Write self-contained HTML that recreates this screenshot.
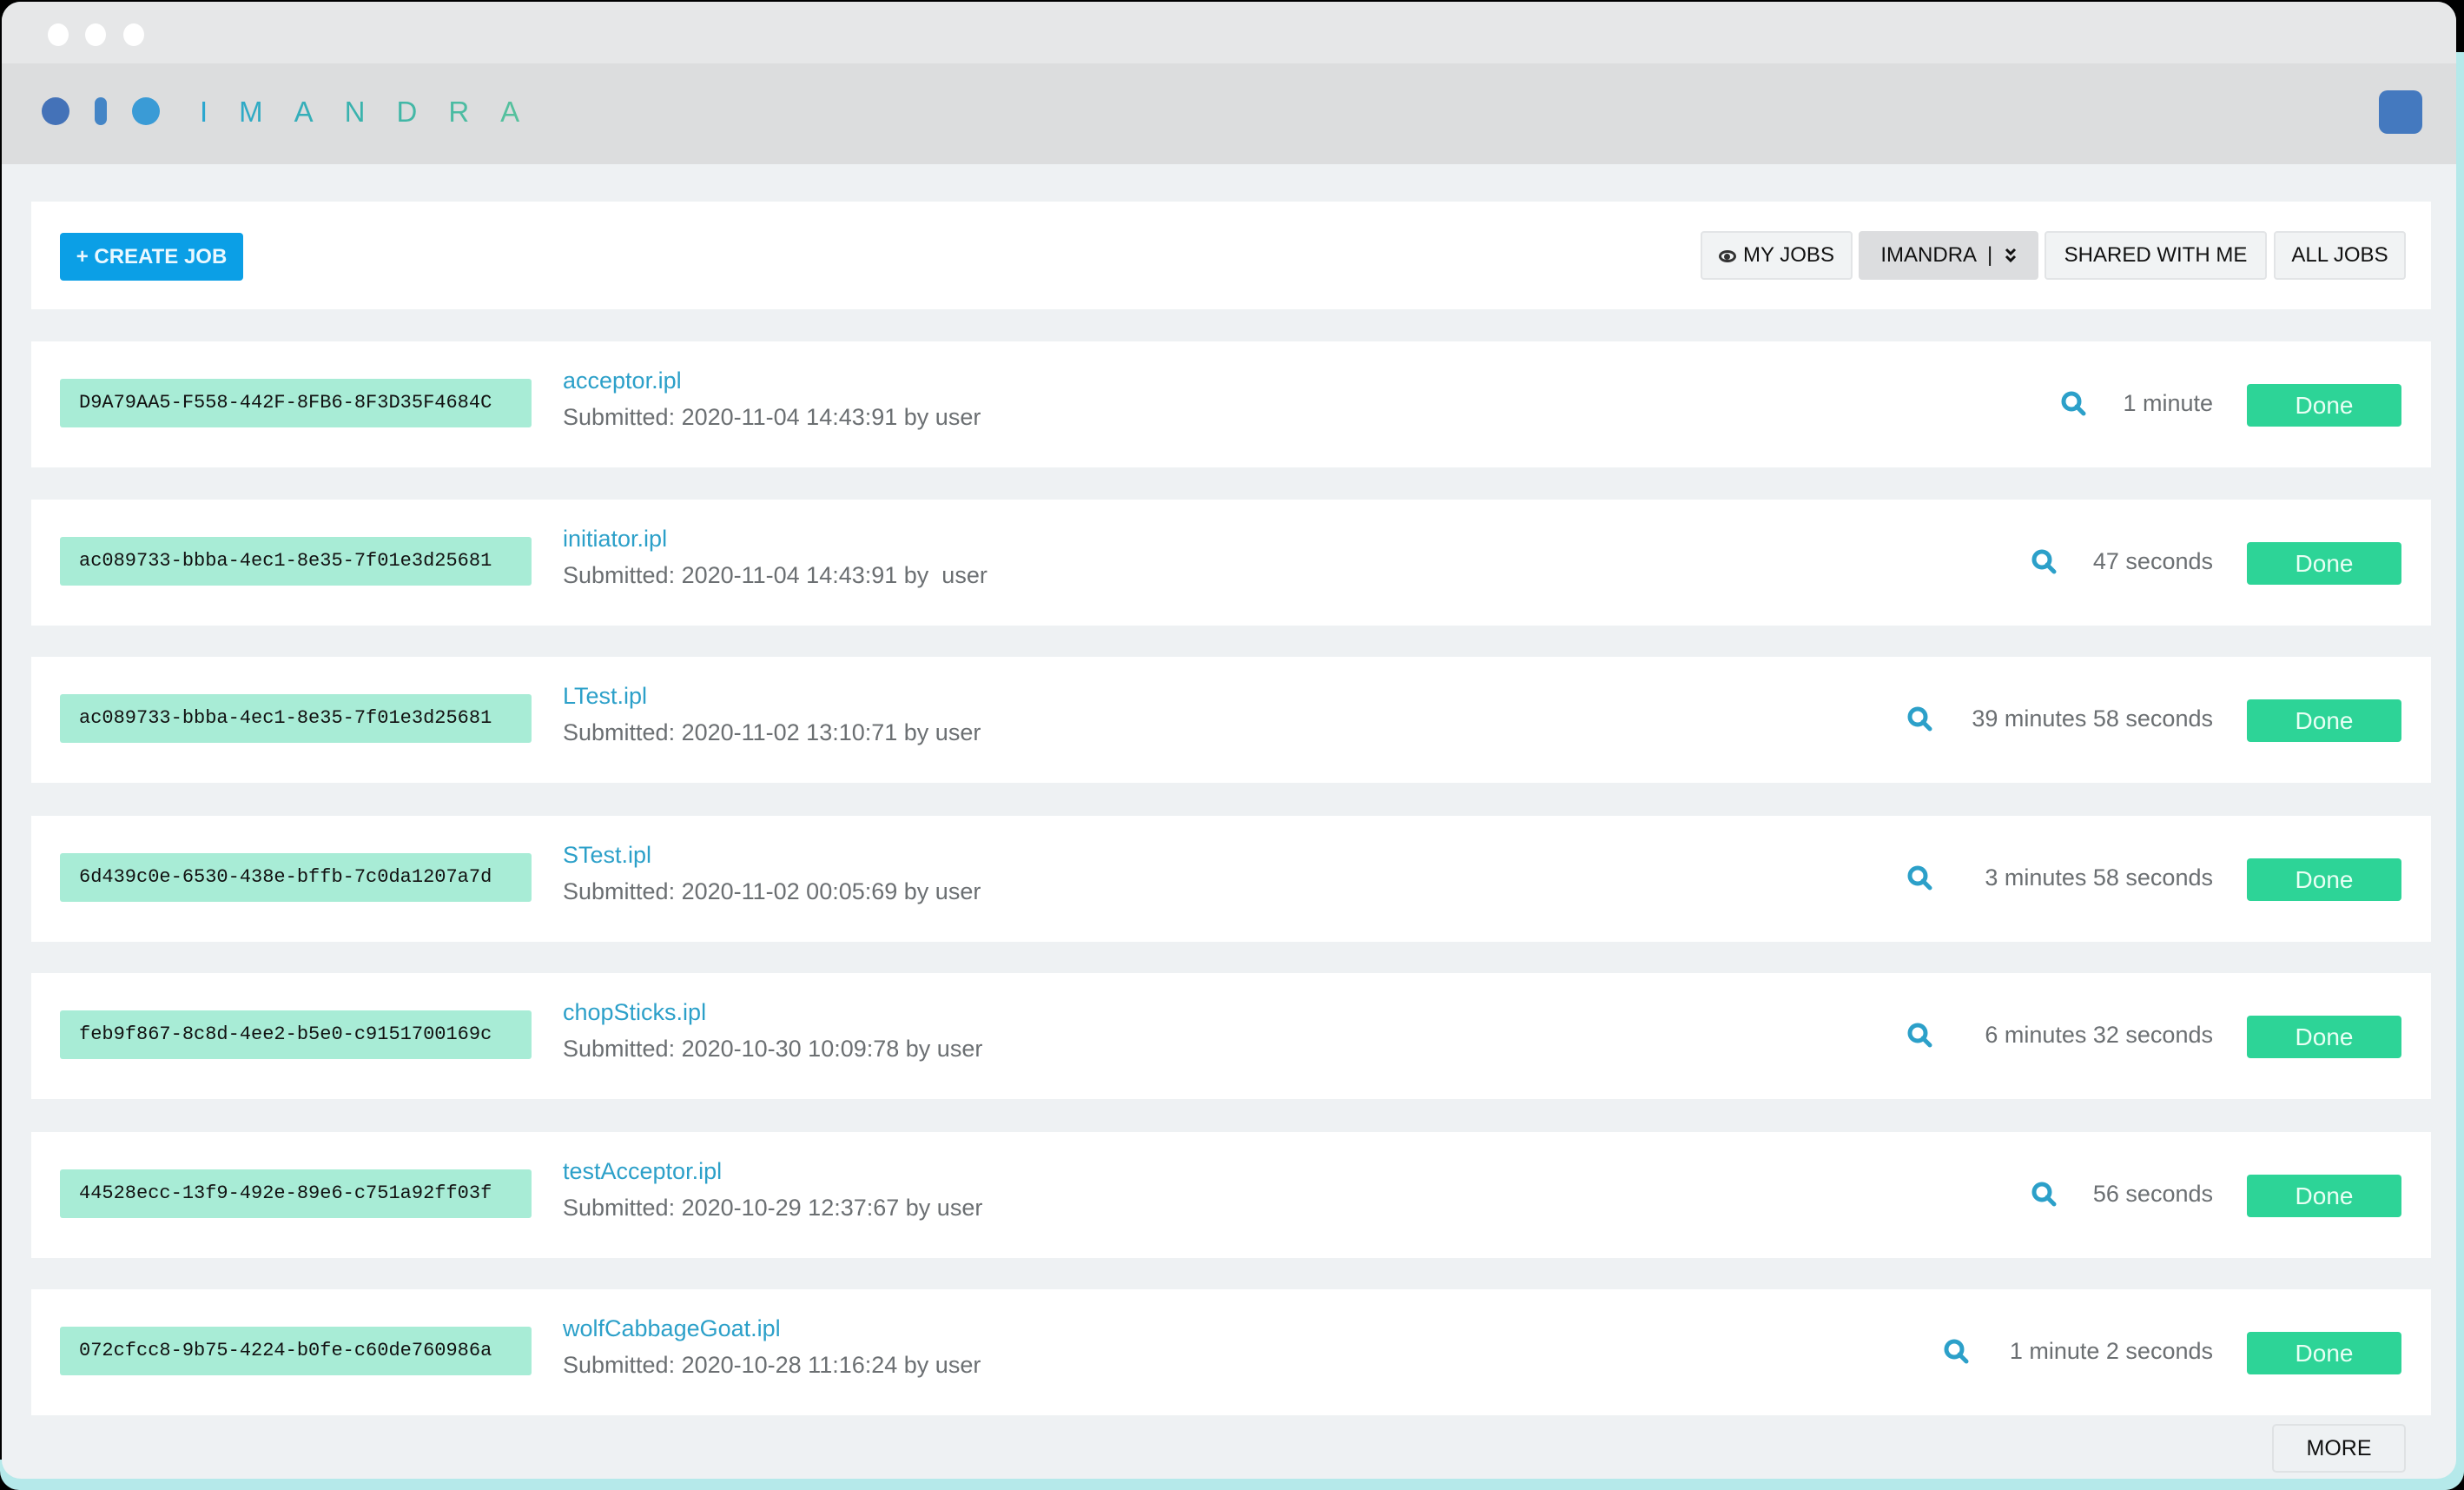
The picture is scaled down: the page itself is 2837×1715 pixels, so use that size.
<!DOCTYPE html>
<html><head><meta charset="utf-8"><style>
*{margin:0;padding:0;box-sizing:border-box}
body{width:2837px;height:1715px;background:#000;position:relative;overflow:hidden;font-family:"Liberation Sans",sans-serif}
.abs{position:absolute;white-space:nowrap}
.win{left:2px;top:2px;width:2826px;height:1700px;background:#eef1f3;border-radius:22px;overflow:hidden}
.shadowR{left:2800px;top:60px;width:37px;height:1655px;background:#b5e9ea;border-radius:0 0 22px 0}
.shadowB{left:0;top:1680px;width:2837px;height:35px;background:#b5e9ea;border-radius:0 0 22px 22px}
.title{left:0;top:0;width:2826px;height:71px;background:#e6e7e8}
.head{left:0;top:71px;width:2826px;height:116px;background:#dcddde}
.dot{width:24px;height:26px;border-radius:50%;background:#fff;top:25px}
.card{left:34px;width:2763px;background:#fff}
.idb{left:67px;width:543px;height:56px;background:#a8ecd6;border-radius:3px;font-family:"Liberation Mono",monospace;font-size:22px;color:#111;line-height:56px;padding-left:22px;overflow:hidden}
.ttl{left:646px;font-size:27px;color:#2ca0c9}
.sub{left:646px;font-size:27px;color:#6b6f72}
.dur{font-size:27px;color:#6b6f72;text-align:right}
.done{left:2585px;width:178px;height:49px;background:#2dd497;border-radius:4px;color:#e8fff4;font-size:28px;text-align:center;line-height:49px}
.fb{top:264px;height:56px;border:2px solid #e2e4e6;border-radius:4px;background:#f1f3f4;font-size:24px;color:#111;line-height:52px;text-align:center}
</style></head><body>
<div class="abs shadowR"></div><div class="abs shadowB"></div>
<div class="abs win">
 <div class="abs title"></div>
 <div class="abs head"></div>
 <div class="abs dot" style="left:53px"></div>
 <div class="abs dot" style="left:96px"></div>
 <div class="abs dot" style="left:140px"></div>
 <div class="abs" style="left:46px;top:110px;width:32px;height:32px;border-radius:50%;background:#4472b8"></div>
 <div class="abs" style="left:107px;top:110px;width:14px;height:32px;border-radius:7px;background:#4485c6"></div>
 <div class="abs" style="left:150px;top:110px;width:32px;height:32px;border-radius:50%;background:#3a9bd6"></div>
 <div class="abs" style="left:228px;top:110px;font-size:33px;letter-spacing:36px;line-height:34px;background:linear-gradient(90deg,#2aa6d0,#3cb4a9 50%,#5cc49a);-webkit-background-clip:text;color:transparent">IMANDRA</div>
 <div class="abs" style="left:2737px;top:102px;width:50px;height:50px;border-radius:10px;background:#4479bf"></div>

 <div class="abs card" style="top:230px;height:124px"></div>
 <div class="abs" style="left:67px;top:266px;width:211px;height:55px;background:#0b9fe6;border-radius:4px;color:#eaf8ff;font-size:24px;font-weight:bold;line-height:55px;text-align:center">+ CREATE JOB</div>
 <div class="abs fb" style="left:1956px;width:175px"><span style="display:inline-block;width:20px;height:14px;border:3px solid #333;border-radius:50%;vertical-align:-1px;margin-right:8px;position:relative"><span style="position:absolute;left:3px;top:1px;width:7px;height:7px;background:#333;border-radius:50%"></span></span>MY JOBS</div>
 <div class="abs fb" style="left:2138px;width:207px;background:#dcdddf;border-color:#dcdddf">IMANDRA &nbsp;| &nbsp;<svg width="14" height="20" viewBox="0 0 14 20" style="vertical-align:-3px"><path d="M2 3l5 5 5-5M2 11l5 5 5-5" fill="none" stroke="#111" stroke-width="3"/></svg></div>
 <div class="abs fb" style="left:2352px;width:256px">SHARED WITH ME</div>
 <div class="abs fb" style="left:2616px;width:152px">ALL JOBS</div>

 <div class="abs" style="left:2614px;top:1637px;width:154px;height:56px;border:2px solid #dfe2e4;border-radius:5px;background:#eef1f3;font-size:25px;line-height:52px;text-align:center;color:#111">MORE</div>
</div>
<svg width="0" height="0" style="position:absolute"><defs><symbol id="mg" viewBox="0 0 32 32"><circle cx="13" cy="13" r="9" fill="none" stroke="#2ca0c9" stroke-width="5"/><path d="M19 19l8 8" stroke="#2ca0c9" stroke-width="5" stroke-linecap="round"/></symbol></defs></svg>
<div style="position:absolute;left:2px;top:2px">
<div class="abs card" style="top:391px;height:145px"></div>
<div class="abs idb" style="top:434px">D9A79AA5-F558-442F-8FB6-8F3D35F4684C</div>
<div class="abs ttl" style="top:421px">acceptor.ipl</div>
<div class="abs sub" style="top:463px">Submitted: 2020-11-04 14:43:91 by user</div>
<svg class="abs" style="left:2370px;top:447px" width="32" height="32"><use href="#mg"/></svg>
<div class="abs dur" style="top:447px;left:2146px;width:400px">1 minute</div>
<div class="abs done" style="top:440px">Done</div>

<div class="abs card" style="top:573px;height:145px"></div>
<div class="abs idb" style="top:616px">ac089733-bbba-4ec1-8e35-7f01e3d25681</div>
<div class="abs ttl" style="top:603px">initiator.ipl</div>
<div class="abs sub" style="top:645px">Submitted: 2020-11-04 14:43:91 by &nbsp;user</div>
<svg class="abs" style="left:2336px;top:629px" width="32" height="32"><use href="#mg"/></svg>
<div class="abs dur" style="top:629px;left:2146px;width:400px">47 seconds</div>
<div class="abs done" style="top:622px">Done</div>

<div class="abs card" style="top:754px;height:145px"></div>
<div class="abs idb" style="top:797px">ac089733-bbba-4ec1-8e35-7f01e3d25681</div>
<div class="abs ttl" style="top:784px">LTest.ipl</div>
<div class="abs sub" style="top:826px">Submitted: 2020-11-02 13:10:71 by user</div>
<svg class="abs" style="left:2193px;top:810px" width="32" height="32"><use href="#mg"/></svg>
<div class="abs dur" style="top:810px;left:2146px;width:400px">39 minutes 58 seconds</div>
<div class="abs done" style="top:803px">Done</div>

<div class="abs card" style="top:937px;height:145px"></div>
<div class="abs idb" style="top:980px">6d439c0e-6530-438e-bffb-7c0da1207a7d</div>
<div class="abs ttl" style="top:967px">STest.ipl</div>
<div class="abs sub" style="top:1009px">Submitted: 2020-11-02 00:05:69 by user</div>
<svg class="abs" style="left:2193px;top:993px" width="32" height="32"><use href="#mg"/></svg>
<div class="abs dur" style="top:993px;left:2146px;width:400px">3 minutes 58 seconds</div>
<div class="abs done" style="top:986px">Done</div>

<div class="abs card" style="top:1118px;height:145px"></div>
<div class="abs idb" style="top:1161px">feb9f867-8c8d-4ee2-b5e0-c9151700169c</div>
<div class="abs ttl" style="top:1148px">chopSticks.ipl</div>
<div class="abs sub" style="top:1190px">Submitted: 2020-10-30 10:09:78 by user</div>
<svg class="abs" style="left:2193px;top:1174px" width="32" height="32"><use href="#mg"/></svg>
<div class="abs dur" style="top:1174px;left:2146px;width:400px">6 minutes 32 seconds</div>
<div class="abs done" style="top:1167px">Done</div>

<div class="abs card" style="top:1301px;height:145px"></div>
<div class="abs idb" style="top:1344px">44528ecc-13f9-492e-89e6-c751a92ff03f</div>
<div class="abs ttl" style="top:1331px">testAcceptor.ipl</div>
<div class="abs sub" style="top:1373px">Submitted: 2020-10-29 12:37:67 by user</div>
<svg class="abs" style="left:2336px;top:1357px" width="32" height="32"><use href="#mg"/></svg>
<div class="abs dur" style="top:1357px;left:2146px;width:400px">56 seconds</div>
<div class="abs done" style="top:1350px">Done</div>

<div class="abs card" style="top:1482px;height:145px"></div>
<div class="abs idb" style="top:1525px">072cfcc8-9b75-4224-b0fe-c60de760986a</div>
<div class="abs ttl" style="top:1512px">wolfCabbageGoat.ipl</div>
<div class="abs sub" style="top:1554px">Submitted: 2020-10-28 11:16:24 by user</div>
<svg class="abs" style="left:2235px;top:1538px" width="32" height="32"><use href="#mg"/></svg>
<div class="abs dur" style="top:1538px;left:2146px;width:400px">1 minute 2 seconds</div>
<div class="abs done" style="top:1531px">Done</div>
</div>
</body></html>
